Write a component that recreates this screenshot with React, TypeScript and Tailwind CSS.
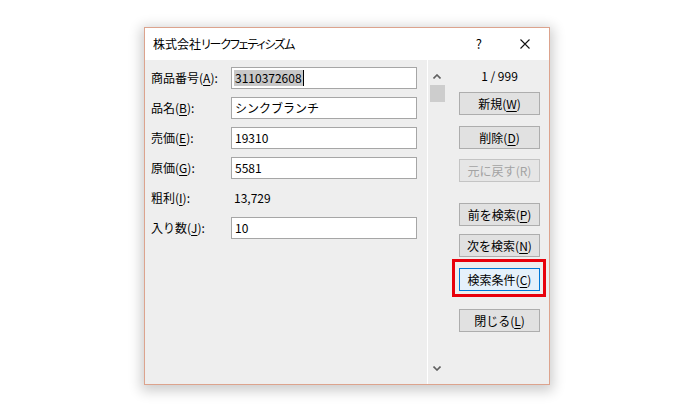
import React from 'react';

const font = "font-['Segoe_UI','Noto_Sans_CJK_JP',sans-serif]";

function Mn({ children }: { children: React.ReactNode }) {
  return <span className="underline underline-offset-2 decoration-1">{children}</span>;
}

const rows: { label: string; key: string; value: string; plain?: boolean; selected?: boolean }[] = [
  { label: '商品番号', key: 'A', value: '3110372608', selected: true },
  { label: '品名', key: 'B', value: 'シンクブランチ' },
  { label: '売価', key: 'E', value: '19310' },
  { label: '原価', key: 'G', value: '5581' },
  { label: '粗利', key: 'I', value: '13,729', plain: true },
  { label: '入り数', key: 'J', value: '10' },
];

function Btn({
  text,
  k,
  disabled,
  focused,
  className = '',
}: {
  text: string;
  k: string;
  disabled?: boolean;
  focused?: boolean;
  className?: string;
}) {
  const look = focused
    ? 'bg-[#e5f1fb] border-[#0078d7] text-black'
    : disabled
      ? 'bg-[#e6e6e6] border-[#c4c4c4] text-[#a3a3a3]'
      : 'bg-[#e1e1e1] border-[#adadad] text-black';
  return (
    <div
      className={`w-[81px] h-[23px] border flex items-center justify-center text-[12px] leading-none ${look} ${className}`}
    >
      {text}(
      {disabled ? k : <Mn>{k}</Mn>})
    </div>
  );
}

export default function App() {
  return (
    <div className={`w-[698px] h-[419px] bg-white pl-[144px] pt-[27px] ${font}`}>
      <div className="w-[406px] h-[358px] border border-[#dca38d] bg-[#eeeeee] shadow-[0_3px_12px_3px_rgba(0,0,0,0.2)] flex flex-col">
        {/* Title bar */}
        <div className="h-[32px] bg-white flex items-center pl-[8px] text-[12px] text-black">
          <span>株式会社</span>
          <span className="[font-feature-settings:'palt'] tracking-[-1.2px]">リークフェティシズム</span>
          <span className="ml-auto mr-[38px] text-[13px]">?</span>
          <svg width="10" height="10" viewBox="0 0 10 10" className="mr-[19px]">
            <path d="M0.5 0.5 L9.5 9.5 M9.5 0.5 L0.5 9.5" stroke="#111" strokeWidth="1.1" />
          </svg>
        </div>

        {/* Body */}
        <div className="flex flex-1">
          {/* Form */}
          <div className="w-[282px] pl-[6px] pt-[7px] flex flex-col gap-[8px] text-[12px] text-black">
            {rows.map((r) => (
              <div key={r.key} className="flex items-center h-[22px]">
                <div className="w-[80px] whitespace-nowrap">
                  {r.label}(<Mn>{r.key}</Mn>):
                </div>
                {r.plain ? (
                  <div className="pl-[3px]">{r.value}</div>
                ) : (
                  <div className="w-[186px] h-[22px] bg-white border border-[#a6a6a6] flex items-center pl-[2px]">
                    {r.selected ? (
                      <span className="bg-[#c8c8c8] px-[1px] leading-[16px] border-r border-black">{r.value}</span>
                    ) : (
                      <span className="pl-[1px]">{r.value}</span>
                    )}
                  </div>
                )}
              </div>
            ))}
          </div>

          {/* Scrollbar */}
          <div className="w-[19px] border-l border-white flex flex-col items-center">
            <svg width="8" height="5" viewBox="0 0 8 5" className="mt-[14px]">
              <path d="M0.5 4.5 L4 1 L7.5 4.5" stroke="#606060" strokeWidth="1.6" fill="none" />
            </svg>
            <div className="mt-[6px] w-[15px] h-[17px] bg-[#cdcdcd]" />
            <svg width="8" height="5" viewBox="0 0 8 5" className="mt-auto mb-[13px]">
              <path d="M0.5 0.5 L4 4 L7.5 0.5" stroke="#606060" strokeWidth="1.6" fill="none" />
            </svg>
          </div>

          {/* Buttons */}
          <div className="pl-[13px] pt-[8px] flex flex-col text-[12px]">
            <div className="w-[81px] h-[16px] flex items-center justify-center text-black">1 / 999</div>
            <Btn text="新規" k="W" className="mt-[8px]" />
            <Btn text="削除" k="D" className="mt-[11px]" />
            <Btn text="元に戻す" k="R" disabled className="mt-[10px]" />
            <Btn text="前を検索" k="P" className="mt-[21px]" />
            <Btn text="次を検索" k="N" className="mt-[8px]" />
            <div className="relative mt-[11px]">
              <Btn text="検索条件" k="C" focused />
              <span className="absolute -left-[7px] -top-[9px] -right-[6px] -bottom-[6px] border-[3px] border-[#e8000b]" />
            </div>
            <Btn text="閉じる" k="L" className="mt-[18px]" />
          </div>
        </div>
      </div>
    </div>
  );
}
